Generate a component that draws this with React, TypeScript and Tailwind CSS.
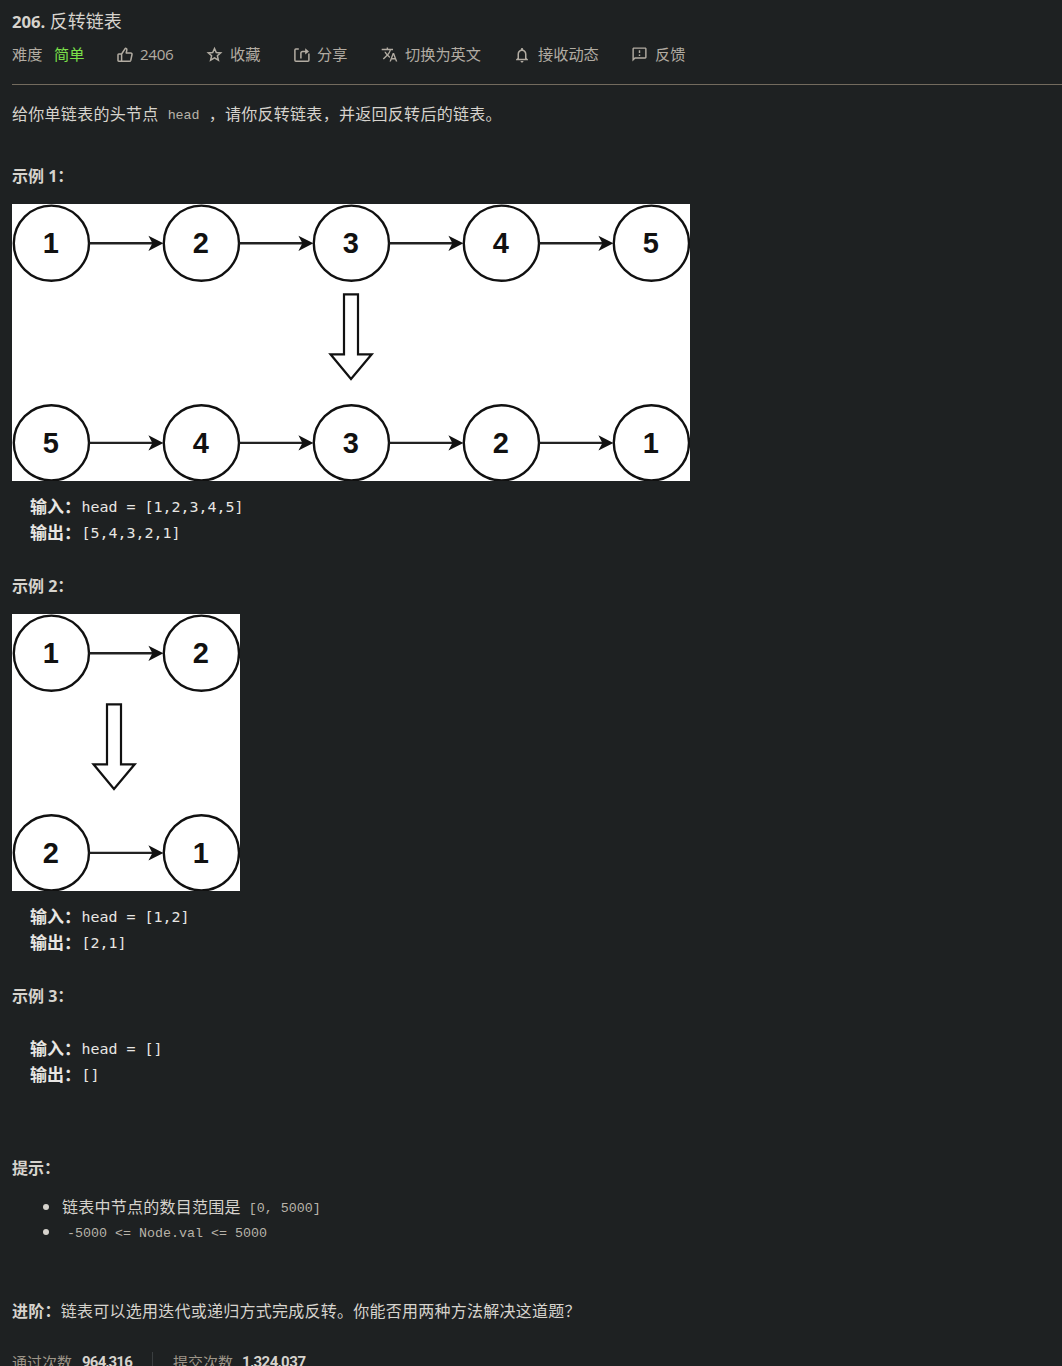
import type { ReactNode } from "react";
import { clsx } from "clsx";
import {
  MdNotificationsNone,
  MdOutlineFeedback,
  MdTranslate,
} from "react-icons/md";

const NODE_GAP = 150;
const NODE_Y = [39, 238.6];

function ThumbIcon() {
  return (
    <svg
      viewBox="0 0 16 16"
      className="size-4"
      fill="none"
      stroke="currentColor"
      strokeWidth="1.5"
      strokeLinejoin="round"
    >
      <path d="M4.6 7 8.3 1.3c1.1 0 1.7.8 1.5 1.8L9.2 6h4.6c.8 0 1.4.7 1.2 1.5l-1.2 5.7c-.2.7-.7 1.1-1.4 1.1H1.8c-.5 0-.8-.3-.8-.8V7.8c0-.5.3-.8.8-.8zM4.6 7v7.3" />
    </svg>
  );
}

function StarIcon() {
  return (
    <svg
      viewBox="0 0 17 17"
      className="size-[17px]"
      fill="none"
      stroke="currentColor"
      strokeWidth="1.5"
    >
      <path d="m8.5 2.5 1.8 4 4.4.4-3.3 2.9 1 4.3-3.9-2.3-3.9 2.3 1-4.3-3.3-2.9 4.4-.4z" />
    </svg>
  );
}

function ShareIcon() {
  return (
    <svg
      viewBox="0 0 16 16"
      className="size-4"
      fill="none"
      stroke="currentColor"
      strokeWidth="1.5"
    >
      <path d="M4.8 1.9H1.9c-.6 0-1 .4-1 1v10.4c0 .6.4 1 1 1h12c.6 0 1-.4 1-1V6.4" />
      <path d="M6.9 11.6V6.2c0-1 .8-1.8 1.8-1.8h4" />
      <path d="M11.2 1.2 15 4.4l-3.8 3.1z" fill="currentColor" stroke="none" />
    </svg>
  );
}

interface ActionProps {
  icon: ReactNode;
  label: string;
  className: string;
}

function Action({ icon, label, className }: ActionProps) {
  return (
    <button className={clsx("flex shrink-0 items-center gap-[7px] whitespace-nowrap", className)}>
      {icon}
      <span className="-mt-0.5">{label}</span>
    </button>
  );
}

interface ListDiagramProps {
  width: number;
  arrowX: number;
  rows: number[][];
}

function ListDiagram({ width, arrowX, rows }: ListDiagramProps) {
  return (
    <svg width={width} height={277} viewBox={`0 0 ${width} 277`} className="block bg-white">
      {rows.map((row, r) =>
        row.map((value, i) => {
          const x = 39.4 + i * NODE_GAP;
          const y = NODE_Y[r];
          return (
            <g key={`${r}-${i}`}>
              <circle cx={x} cy={y + 0.2} r={37.6} fill="none" stroke="#111" strokeWidth={2.4} />
              <text
                x={x - 0.5}
                y={y + 10.4}
                textAnchor="middle"
                fill="#111"
                className="font-['Liberation_Sans',sans-serif] text-[29px] font-bold"
              >
                {value}
              </text>
              {i < row.length - 1 && (
                <>
                  <path d={`M${x + 38} ${y + 0.3}h66`} stroke="#222" strokeWidth={2.4} />
                  <path d={`M${x + 112} ${y + 0.3}l-15-7.6 4 7.6-4 7.6z`} fill="#111" />
                </>
              )}
            </g>
          );
        })
      )}
      <path
        d={`M${arrowX - 7} 90.3h14v60h13.7L${arrowX} 175 ${arrowX - 20.5} 150.3H${arrowX - 7}z`}
        fill="none"
        stroke="#111"
        strokeWidth={2.2}
      />
    </svg>
  );
}

function Heading({ children, className }: { children: ReactNode; className?: string }) {
  return (
    <h3 className={clsx("h-[26px] text-base leading-[26px] font-bold whitespace-pre", className)}>
      {children}
    </h3>
  );
}

interface SampleProps {
  input: string;
  output: string;
  className?: string;
}

function Sample({ input, output, className }: SampleProps) {
  const rows = [
    { label: "输入：", value: input },
    { label: "输出：", value: output },
  ];

  return (
    <div className={clsx("pl-[18px] text-[#e8e6e3]", className)}>
      {rows.map(({ label, value }) => (
        <div key={label} className="flex h-[26px] items-center whitespace-pre">
          <span className="-mt-px w-[51.5px] text-[17px] font-bold">{label}</span>
          <code className="font-['DejaVu_Sans_Mono',monospace] text-[14.95px]">{value}</code>
        </div>
      ))}
    </div>
  );
}

function InlineCode({ children, className }: { children: ReactNode; className?: string }) {
  return (
    <code
      className={clsx(
        "pt-[5px] font-['Liberation_Mono',monospace] text-[13.33px] whitespace-pre text-[#b8b3a9]",
        className
      )}
    >
      {children}
    </code>
  );
}

export default function App() {
  return (
    <main className="h-[1366px] w-full overflow-hidden bg-[#1e2122] pl-3 font-['Open_Sans','Noto_Sans_CJK_SC',sans-serif] text-[#d6d3cd]">
      <h1 className="h-11 pt-[7px] text-[18px] leading-7 whitespace-pre">
        <span className="text-[16.7px] font-bold">206. </span>反转链表
      </h1>

      <div className="flex h-[22px] items-center text-[15.2px] text-[#b2aca2]">
        <span className="-mt-0.5 w-[42px] shrink-0">难度</span>
        <span className="-mt-0.5 w-[63px] shrink-0 text-[#7be04a]">简单</span>
        <Action className="w-[89px] tracking-[-0.35px]" icon={<ThumbIcon />} label="2406" />
        <Action className="w-[88px]" icon={<StarIcon />} label="收藏" />
        <Action className="w-[87px]" icon={<ShareIcon />} label="分享" />
        <Action className="w-[132px]" icon={<MdTranslate size={17} />} label="切换为英文" />
        <Action className="w-[118px]" icon={<MdNotificationsNone size={18} />} label="接收动态" />
        <Action className="w-20" icon={<MdOutlineFeedback size={17} />} label="反馈" />
      </div>

      <hr className="mt-[18px] border-t border-[#736b5e]" />

      <p className="mt-[15px] mb-9 flex h-[27px] items-center text-base tracking-[0.29px] whitespace-nowrap">
        给你单链表的头节点
        <InlineCode className="mr-[9px] ml-[9px] tracking-normal">head</InlineCode>
        ，请你反转链表，并返回反转后的链表。
      </p>

      <Heading>示例 1：</Heading>
      <div className="mt-[15px]">
        <ListDiagram
          width={678}
          arrowX={339}
          rows={[
            [1, 2, 3, 4, 5],
            [5, 4, 3, 2, 1],
          ]}
        />
      </div>
      <Sample className="mt-[13px]" input="head = [1,2,3,4,5]" output="[5,4,3,2,1]" />

      <Heading className="mt-[27px]">示例 2：</Heading>
      <div className="mt-[15px]">
        <ListDiagram
          width={228}
          arrowX={102}
          rows={[
            [1, 2],
            [2, 1],
          ]}
        />
      </div>
      <Sample className="mt-[13px]" input="head = [1,2]" output="[2,1]" />

      <Heading className="mt-[27px]">示例 3：</Heading>
      <Sample className="mt-[27px]" input="head = []" output="[]" />

      <Heading className="mt-[67px]">提示：</Heading>
      <ul className="mt-[13px] text-base tracking-[0.25px]">
        <li className="flex h-[25px] items-center pl-[31px]">
          <span className="mr-[13px] size-1.5 rounded-full bg-[#d6d3cd]" />
          链表中节点的数目范围是
          <InlineCode className="ml-2 tracking-normal">[0, 5000]</InlineCode>
        </li>
        <li className="flex h-[25px] items-center pl-[31px]">
          <span className="mr-[18px] size-1.5 rounded-full bg-[#d6d3cd]" />
          <InlineCode className="tracking-normal">{"-5000 <= Node.val <= 5000"}</InlineCode>
        </li>
      </ul>

      <p className="mt-[54px] h-[26px] text-base leading-[26px] tracking-[0.25px] whitespace-nowrap">
        <b>进阶：</b>链表可以选用迭代或递归方式完成反转。你能否用两种方法解决这道题？
      </p>

      <div className="mt-[26px] flex h-6 items-center text-[15px] whitespace-nowrap text-[#9d9588]">
        <span className="w-[70px]">通过次数</span>
        <b className="w-[70px] font-['Roboto',sans-serif] tracking-[-0.75px] text-[#d6d3cd]">
          964,316
        </b>
        <i className="h-5 w-[21px] border-l border-[#3a3e40]" />
        <span className="w-[69px]">提交次数</span>
        <b className="font-['Roboto',sans-serif] tracking-[-0.45px] text-[#d6d3cd]">1,324,037</b>
      </div>
    </main>
  );
}
